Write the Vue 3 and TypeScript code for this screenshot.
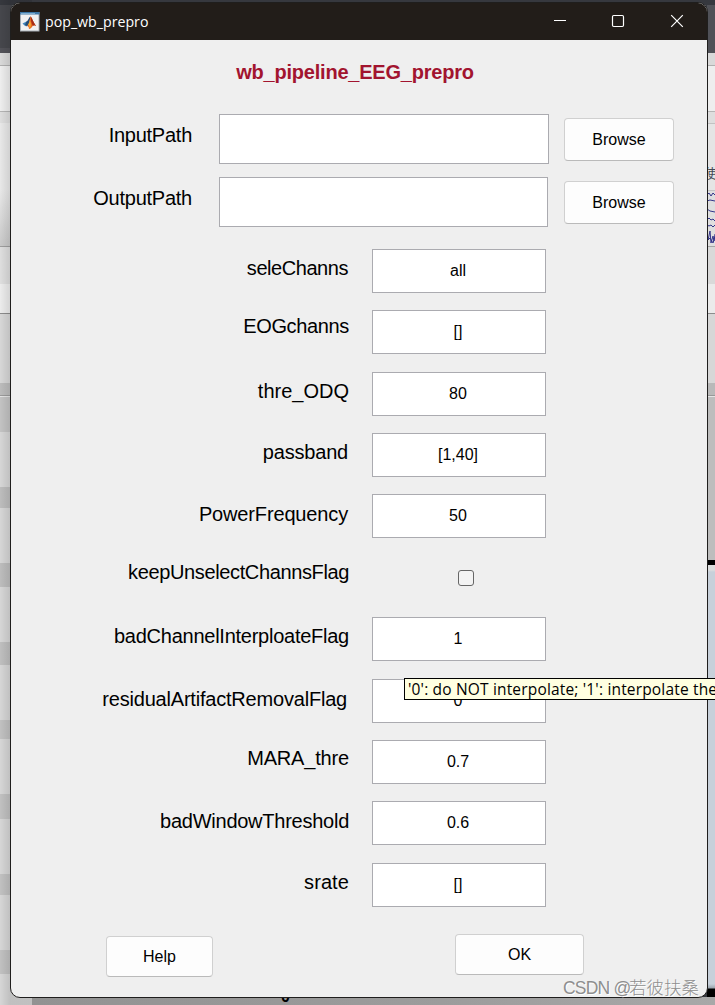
<script setup lang="ts">
import { ref } from 'vue'

interface PathRow {
  label: string
  value: string
  inputWidth: number
}

interface ParamRow {
  label: string
  value: string
  kind: 'text' | 'check'
  height: number
  lift: number
  inset: number
  tracking: number
}

const paths = ref<PathRow[]>([
  { label: 'InputPath', value: '', inputWidth: 330 },
  { label: 'OutputPath', value: '', inputWidth: 329 },
])

const params = ref<ParamRow[]>([
  { label: 'seleChanns', value: 'all', kind: 'text', height: 61, lift: 3, inset: 1, tracking: -0.45 },
  { label: 'EOGchanns', value: '[]', kind: 'text', height: 62, lift: 6, inset: 0, tracking: -0.35 },
  { label: 'thre_ODQ', value: '80', kind: 'text', height: 61, lift: 3, inset: 0, tracking: 0 },
  { label: 'passband', value: '[1,40]', kind: 'text', height: 61, lift: 3, inset: 1, tracking: -0.2 },
  { label: 'PowerFrequency', value: '50', kind: 'text', height: 62, lift: 2, inset: 1, tracking: -0.15 },
  { label: 'keepUnselectChannsFlag', value: '', kind: 'check', height: 61, lift: 6, inset: 0, tracking: -0.37 },
  { label: 'badChannelInterploateFlag', value: '1', kind: 'text', height: 62, lift: 3, inset: 0, tracking: -0.25 },
  { label: 'residualArtifactRemovalFlag', value: '0', kind: 'text', height: 61, lift: 2, inset: 2, tracking: -0.2 },
  { label: 'MARA_thre', value: '0.7', kind: 'text', height: 61, lift: 4, inset: 0, tracking: -0.17 },
  { label: 'badWindowThreshold', value: '0.6', kind: 'text', height: 62, lift: 2, inset: 0, tracking: -0.25 },
  { label: 'srate', value: '[]', kind: 'text', height: 61, lift: 3, inset: 0, tracking: 0.1 },
])
</script>

<template>
  <div class="desktop">
    <div class="edge left-edge"></div>
    <div class="edge right-edge">
      <span class="side-glyph">使</span>
      <svg class="squiggles" width="8" height="54" viewBox="0 0 8 54" fill="none" stroke="#35358a">
        <path d="M0 4l2-2 2 3 2-3 2 2M0 10l3-1 5 1M0 18l3 2 5 1M0 29l2-2 2 2 2-1 2 2M0 34l2 1 2-1 2 2 2-2M0 42l1 7 2-9 1 12 2-7 1 5 1-7M0 50l3-3 3 5 2-6" />
      </svg>
    </div>
    <div class="under"><b class="zero">0</b></div>

    <main class="window">
      <header class="titlebar">
        <svg class="app-icon" width="20" height="20" viewBox="0 0 20 20">
          <rect x=".5" y=".5" width="18.500" height="18.500" fill="#f1f1f1" stroke="#a5adb5" />
          <path d="M0 0h19.500v2.500H0z" fill="#3f79a8" />
          <path d="M1 1h14v1H1z" fill="#7faed0" />
          <path d="M2.500 11.500l4-2 2 1-2 4-2-1z" fill="#3f83ba" />
          <path d="M6.500 9.500c2-1 2-4 4-5L9 13l-2 1-2-1z" fill="#244d78" />
          <path d="M10.500 4.500c1 0 3 6 5.500 9.500-2-1-3-1-4 1-1 1-2 2-3 2 0-2-1-3-2-3 2-1 2.500-6 3.500-9.500z" fill="#e66a1f" />
          <path d="M10.500 4.500c1 0 3 6 5.500 9.500-2-1-2-1-3 0-2-3-2-6-2.500-9.500z" fill="#a72c19" />
          <path d="M10 9c1 2 1 4 0 7-1-1 0-3-2-3z" fill="#f7b43b" />
        </svg>
        <span class="caption">pop_wb_prepro</span>
        <svg class="controls" width="136" height="16" viewBox="0 0 136 16" fill="none" stroke="#fff">
          <path d="M3 6.500h12" />
          <rect x="61.500" y="1.500" width="11" height="11" rx="1.200" stroke-width="1.200" />
          <path d="M120.200 1.200l11.600 11.600M131.800 1.200l-11.600 11.600" stroke-width="1.200" />
        </svg>
      </header>

      <h1 class="heading">wb_pipeline_EEG_prepro</h1>

      <section class="paths">
        <div v-for="p in paths" :key="p.label" class="path-row">
          <label class="label path-label">{{ p.label }}</label>
          <div class="input-cell">
            <input v-model="p.value" class="field path-field" :style="{ width: p.inputWidth + 'px' }" />
          </div>
          <button class="button browse">Browse</button>
        </div>
      </section>

      <section class="params">
        <div v-for="r in params" :key="r.label" class="param-row" :style="{ height: r.height + 'px' }">
          <label
            class="label"
            :style="{
              paddingBottom: r.lift * 2 + 'px',
              paddingRight: r.inset + 'px',
              letterSpacing: r.tracking + 'px',
            }"
          >{{ r.label }}</label>
          <input v-if="r.kind === 'text'" v-model="r.value" class="field param-field" />
          <span v-else class="checkbox"></span>
        </div>
      </section>

      <footer class="actions">
        <button class="button help">Help</button>
        <button class="button ok">OK</button>
      </footer>
    </main>

    <div class="tooltip">'0': do NOT interpolate; '1': interpolate the</div>
    <div class="watermark"><span class="latin">CSDN @</span>若彼扶桑</div>
  </div>
</template>

<style>
html,
body {
  overflow: hidden;
}
</style>

<style scoped>
.desktop {
  position: relative;
  box-sizing: border-box;
  width: 715px;
  height: 1005px;
  padding: 2px 7px 7px 10px;
  overflow: hidden;
  background: #36383e;
  font-family: 'Liberation Sans', Arial, sans-serif;
}

.edge {
  position: absolute;
  top: 0;
  bottom: 0;
}

.left-edge {
  left: 0;
  width: 32px;
  background:
    linear-gradient(90deg, transparent, rgba(0, 0, 0, 0.1) 10px),
    linear-gradient(
      #36383e 5px, #46474c 5px 48px, #525258 48px 53px, #d9d9d9 53px 65px, #b0b0b0 65px 66px,
      #eeeeee 66px 111px, #b5b5b5 111px 112px, #dedede 112px 123px, #e8e8e8 123px 190px, #c9c9c9 246px,
      #9e9e9e 246px 247px, #dedede 247px 284px, #ececec 284px 313px, #8c8c8c 313px 314px,
      #d7d7d7 314px 383px, #bcbcbc 383px 395px, #9b9b9b 395px 396px, #e5e5e5 396px 397px, #c3c3c3 397px 432px,
      #d6d6d6 432px 487px, #bdbdbd 487px 508px, #d6d6d6 508px 563px, #bdbdbd 563px 587px,
      #d6d6d6 587px 642px, #bfbfbf 642px 665px, #d6d6d6 665px 720px, #c1c1c1 720px 739px,
      #d6d6d6 739px 794px, #c1c1c1 794px 819px, #d6d6d6 819px 874px, #c1c1c1 874px 895px,
      #d6d6d6 895px 950px, #c1c1c1 950px 974px, #d6d6d6 974px
    );
}

.right-edge {
  right: 0;
  width: 8px;
  overflow: hidden;
  background: linear-gradient(
    #36383e 5px, #505157 5px 53px, #d9d9d9 53px 65px, #b0b0b0 65px 66px,
    #eeeeee 66px 111px, #b5b5b5 111px 112px, #dedede 112px 123px, #c2c2c2 123px 124px, #e5e5e5 124px 190px,
    #c5c5c5 190px 191px, #dfdfdf 191px 246px, #a5a5a5 246px 247px, #d9d9d9 247px 284px, #ebebeb 284px 313px,
    #8c8c8c 313px 314px, #d7d7d7 314px 383px, #b9b9b9 383px 395px, #989898 395px 396px, #e5e5e5 396px 397px,
    #bdbdbd 397px 560px, #000 560px 565px, #dcdddd 565px 570px, #c7d0da 572px 984px, #9ba4ad 988px, #000 989px 997px,
    #a5a5a5 997px
  );
}

.side-glyph {
  position: absolute;
  top: 164px;
  left: -3px;
  font: 13px/17px 'Noto Sans CJK SC', sans-serif;
  color: #444a56;
}

.squiggles {
  position: absolute;
  top: 191px;
  left: 0;
}

.under {
  position: absolute;
  left: 32px;
  right: 0;
  bottom: 0;
  height: 8px;
  background: linear-gradient(90deg, #929292, #9c9c9c 60%, #a8a8a8);
}

.zero {
  position: absolute;
  left: 249px;
  bottom: -1px;
  font-size: 16px;
  line-height: 18px;
}

.window {
  position: relative;
  box-sizing: border-box;
  display: flex;
  flex-direction: column;
  width: 698px;
  height: 996px;
  border: 1px solid #1f1e1d;
  border-radius: 10px;
  overflow: hidden;
  background: #efefef;
}

.titlebar {
  display: flex;
  align-items: center;
  flex: none;
  height: 37px;
  padding-left: 9px;
  background: #221d19;
  color: #fff;
}

.caption {
  flex: 1;
  margin-left: 5px;
  font: 14.200px/20px 'Open Sans', 'Noto Sans', sans-serif;
}

.controls {
  margin-right: 20px;
}

.heading {
  margin: 20px 0 0;
  padding-right: 8px;
  text-align: center;
  font-size: 20px;
  line-height: 24px;
  letter-spacing: -0.220px;
  color: #a2142f;
}

.paths {
  display: flex;
  flex-direction: column;
  gap: 13px;
  margin-top: 30px;
}

.path-row {
  display: flex;
  height: 50px;
}

.label {
  box-sizing: border-box;
  width: 338px;
  font-size: 20px;
  line-height: 24px;
  text-align: right;
  white-space: nowrap;
  color: #000;
}

.path-label {
  width: 181px;
  padding-top: 9px;
  letter-spacing: -0.250px;
}

.input-cell {
  width: 345px;
  padding-left: 27px;
}

.field {
  box-sizing: border-box;
  margin: 0;
  padding: 0 0 1px;
  border: 1px solid #ababb0;
  border-radius: 0;
  background: #fff;
  font: 16px 'Liberation Sans', Arial, sans-serif;
  color: #000;
  outline: none;
}

.path-field {
  display: block;
  height: 50px;
}

.button {
  box-sizing: border-box;
  padding: 0;
  border: 1px solid #d0d0d0;
  border-bottom-color: #bababa;
  border-radius: 4px;
  background: #fdfdfd;
  font: 16px/20px 'Liberation Sans', Arial, sans-serif;
  color: #000;
}

.browse {
  width: 110px;
  height: 43px;
  margin-top: 4px;
}

.params {
  margin-top: 22px;
}

.param-row {
  display: flex;
  align-items: flex-start;
}

.param-row .label {
  display: flex;
  align-items: center;
  justify-content: flex-end;
  height: 44px;
}

.param-field {
  width: 174px;
  height: 44px;
  margin-left: 23px;
  padding-right: 2px;
  text-align: center;
}

.checkbox {
  box-sizing: border-box;
  width: 16px;
  height: 16px;
  margin: 14px 0 0 109px;
  border: 1px solid #666;
  border-radius: 3px;
  background: #f3f3f3;
}

.actions {
  display: flex;
  align-items: flex-start;
  margin-top: 10px;
  padding-left: 95px;
}

.help {
  width: 107px;
  height: 41px;
  margin-top: 2px;
}

.ok {
  width: 129px;
  height: 41px;
  margin-left: 242px;
}

.tooltip {
  position: absolute;
  left: 404px;
  top: 678px;
  box-sizing: border-box;
  width: 330px;
  height: 22px;
  padding-left: 3px;
  border: 1px solid #000;
  background: #ffffe1;
  font: 15.500px/21px 'Open Sans', 'Noto Sans', sans-serif;
  letter-spacing: 0.170px;
  white-space: nowrap;
  color: #000;
}

.watermark {
  position: absolute;
  left: 563px;
  top: 974px;
  font: 300 17.500px/26px 'Noto Sans CJK SC', sans-serif;
  white-space: nowrap;
  color: #8e8e8e;
  text-shadow: 1px 1px 0 #fff;
}

.latin {
  display: inline-block;
  width: 66px;
  font-family: 'Liberation Sans', Arial, sans-serif;
  letter-spacing: -0.800px;
}
</style>
